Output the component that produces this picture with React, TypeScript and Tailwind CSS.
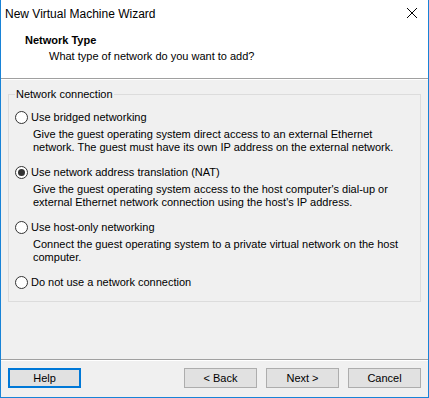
const options = [
  {
    label: 'Use bridged networking',
    desc: [
      'Give the guest operating system direct access to an external Ethernet',
      'network. The guest must have its own IP address on the external network.',
    ],
    checked: false,
  },
  {
    label: 'Use network address translation (NAT)',
    desc: [
      "Give the guest operating system access to the host computer's dial-up or",
      "external Ethernet network connection using the host's IP address.",
    ],
    checked: true,
  },
  {
    label: 'Use host-only networking',
    desc: [
      'Connect the guest operating system to a private virtual network on the host',
      'computer.',
    ],
    checked: false,
  },
  {
    label: 'Do not use a network connection',
    desc: [],
    checked: false,
  },
];

const Radio = ({ checked }: { checked: boolean }) => (
  <span className="w-[13px] h-[13px] rounded-full border border-[#333333] bg-white flex items-center justify-center shrink-0">
    {checked && <span className="w-[7px] h-[7px] rounded-full bg-[#333333]" />}
  </span>
);

const Button = ({ label, focused }: { label: string; focused?: boolean }) => (
  <button
    className={
      focused
        ? 'w-[73px] h-[20px] bg-[#e1e1e1] border-2 border-[#0078d7] text-[11px] leading-none text-black'
        : 'w-[73px] h-[20px] bg-[#e1e1e1] border border-[#adadad] text-[11px] leading-none text-black'
    }
  >
    {label}
  </button>
);

export default function App() {
  return (
    <div
      className="w-[429px] h-[398px] bg-[#f0f0f0] border-x border-b border-[#1883d7] flex flex-col text-black text-[11px]"
      style={{ fontFamily: '"Liberation Sans", Arial, sans-serif' }}
    >
      <div className="bg-white">
        <div className="h-[27px] flex items-center justify-between pl-[4px] pr-[10px]">
          <span className="text-[12px]">New Virtual Machine Wizard</span>
          <svg width="12" height="12" viewBox="0 0 12 12" className="mt-[-1px]">
            <path d="M1 1 L11 11 M11 1 L1 11" stroke="#000" strokeWidth="1" />
          </svg>
        </div>
        <div className="h-[51px] pl-[24px] pt-[6px]">
          <div className="font-bold leading-[15px]">Network Type</div>
          <div className="pl-[24px] leading-[15px] mt-[1px]">What type of network do you want to add?</div>
        </div>
      </div>
      <div className="h-px bg-[#a0a0a0]" />
      <div className="h-px bg-white" />

      <div className="flex-1 pt-[7px]">
        <fieldset className="mx-[7px] border border-[#dcdcdc] pl-[6px] pb-[10px]">
          <legend className="px-[1px] leading-[15px]">Network connection</legend>
          <div className="flex flex-col gap-[10px] pt-[7px]">
            {options.map((o) => (
              <div key={o.label}>
                <div className="flex items-center h-[17px] gap-[3px]">
                  <Radio checked={o.checked} />
                  <span>{o.label}</span>
                </div>
                {o.desc.length > 0 && (
                  <div className="pl-[18px] mt-[2px] leading-[13px]">
                    {o.desc.map((d) => (
                      <div key={d}>{d}</div>
                    ))}
                  </div>
                )}
              </div>
            ))}
          </div>
        </fieldset>
      </div>

      <div className="h-px bg-[#a0a0a0]" />
      <div className="h-px bg-white" />
      <div className="flex items-start px-[7px] pt-[7px] h-[36px]">
        <Button label="Help" focused />
        <div className="flex-1" />
        <div className="flex gap-[9px]">
          <Button label="< Back" />
          <Button label="Next >" />
          <Button label="Cancel" />
        </div>
      </div>
    </div>
  );
}
